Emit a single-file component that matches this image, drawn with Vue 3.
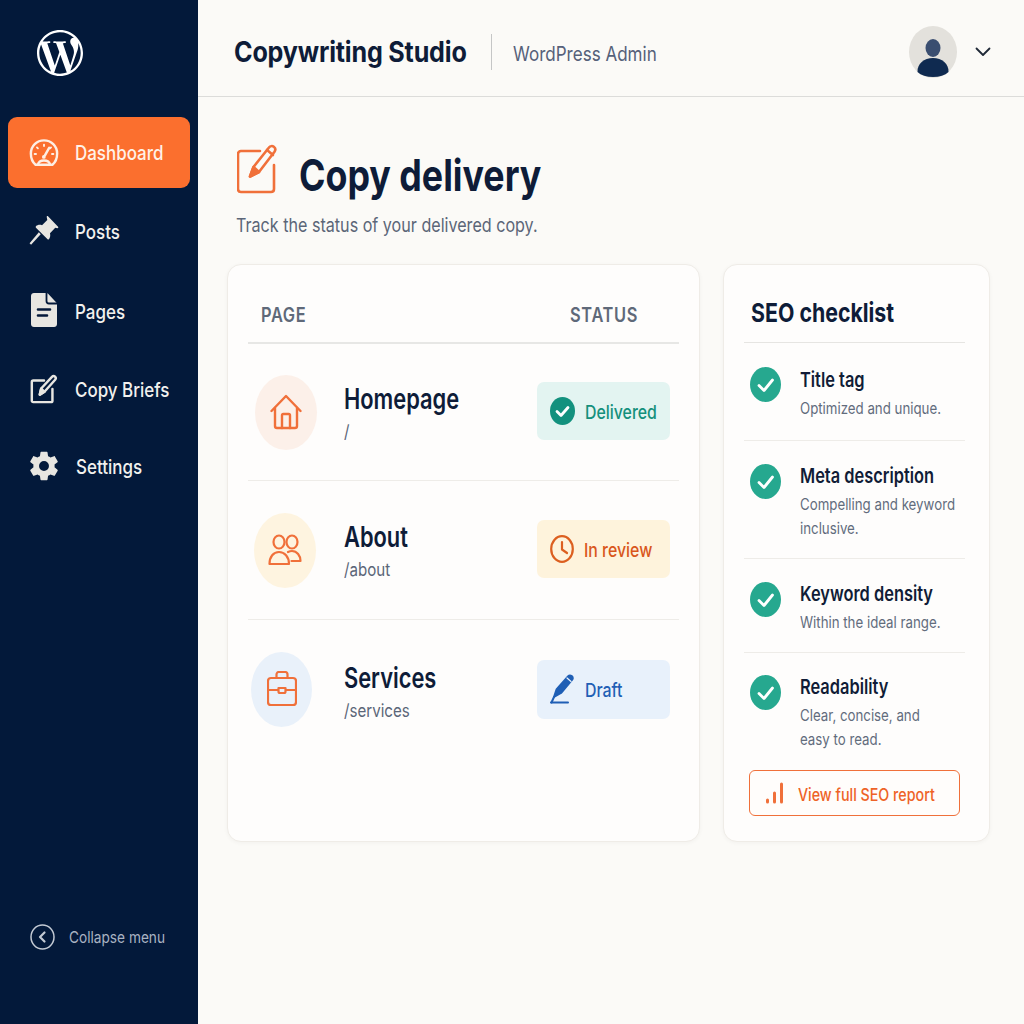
<script setup>
const pages = [
  { key: 'home', name: 'Homepage', path: '/', status: 'Delivered' },
  { key: 'about', name: 'About', path: '/about', status: 'In review' },
  { key: 'services', name: 'Services', path: '/services', status: 'Draft' },
]
const checks = [
  { title: 'Title tag', lines: ['Optimized and unique.'], cls: 'c1' },
  { title: 'Meta description', lines: ['Compelling and keyword', 'inclusive.'], cls: 'c2' },
  { title: 'Keyword density', lines: ['Within the ideal range.'], cls: 'c3' },
  { title: 'Readability', lines: ['Clear, concise, and', 'easy to read.'], cls: 'c4' },
]
</script>

<template>
  <div class="app">
    <aside class="side">
      <svg class="logo" viewBox="0 0 24 24" fill="#fff"><path d="M21.469 6.825c.84 1.537 1.318 3.3 1.318 5.175 0 3.979-2.156 7.456-5.363 9.325l3.295-9.527c.615-1.54.82-2.771.82-3.864 0-.405-.026-.78-.07-1.11m-7.981.105c.647-.03 1.232-.105 1.232-.105.582-.075.514-.93-.067-.899 0 0-1.755.135-2.88.135-1.064 0-2.85-.15-2.85-.15-.585-.03-.661.855-.075.885 0 0 .54.061 1.125.09l1.68 4.605-2.37 7.08L5.354 6.9c.649-.03 1.234-.1 1.234-.1.585-.075.516-.93-.065-.896 0 0-1.746.138-2.874.138-.2 0-.438-.008-.69-.015C4.911 3.15 8.235 1.215 12 1.215c2.809 0 5.365 1.072 7.286 2.833-.046-.003-.091-.009-.141-.009-1.06 0-1.812.923-1.812 1.914 0 .89.513 1.643 1.06 2.531.411.72.89 1.643.89 2.977 0 .915-.354 1.994-.821 3.479l-1.075 3.585-3.9-11.61.001.014zM12 22.784c-1.059 0-2.081-.153-3.048-.437l3.237-9.406 3.315 9.087c.024.053.05.101.078.149-1.12.393-2.325.609-3.582.609M1.211 12c0-1.564.336-3.05.935-4.39L7.29 21.709C3.694 19.96 1.212 16.271 1.211 12M12 0C5.385 0 0 5.385 0 12s5.385 12 12 12 12-5.385 12-12S18.615 0 12 0"/></svg>
      <nav class="nav">
        <a class="item active">
          <svg class="ni" viewBox="0 0 32 32" fill="none" stroke="#fdeee4" stroke-width="2.6" stroke-linecap="round" stroke-linejoin="round">
            <path d="M7 28.500C4 26 2 21.600 2 16.500 2 8.600 8.300 2.500 16 2.500s14 6.100 14 14c0 5.100-2 9.500-5 12z"/>
            <path d="M16 7v1.500M8.500 10l1 1M23.500 10l-1 1M6 17h1.500M24.500 17H26" stroke-width="2"/>
            <path d="M21.500 10.500l-4.500 8" stroke-width="2.600"/>
            <circle cx="15.800" cy="20.200" r="2" fill="#fdeee4" stroke="none"/>
            <path d="M9.500 28.500c.6-2.800 3.200-4.500 6.500-4.500s5.900 1.700 6.500 4.500"/>
          </svg>
          <span class="t nt">Dashboard</span>
        </a>
        <a class="item">
          <svg class="ni pin" viewBox="0 0 32 32" fill="#e8e6e1">
            <path d="M20 1 31 12.500c.6.700.1 1.700-.8 1.600l-2.200-.4-5.600 5.800c.6 2.600.2 4.800-1.200 6.300-.4.400-1 .4-1.400 0L7.400 13.500c-.4-.4-.4-1 0-1.400 1.500-1.500 3.800-2 6.500-1.200l5.600-5.700-.6-3.200c-.1-.9 1-1.300 1.600-.6z"/>
            <path d="M12.500 20.500 2.200 31.600.6 30 10.500 18.500z"/>
          </svg>
          <span class="t nt">Posts</span>
        </a>
        <a class="item">
          <svg class="ni page" viewBox="0 0 26 34">
            <path d="M3 0h12.500c.5 0 1 .2 1.400.6l8.400 8.800c.4.400.7.900.7 1.400V31c0 1.700-1.300 3-3 3H3c-1.700 0-3-1.300-3-3V3C0 1.300 1.300 0 3 0z" fill="#e8e6e1"/>
            <path d="M15.500 0v8c0 1.300 1 2.500 2.500 2.500h8" fill="none" stroke="#04193a" stroke-width="1.800"/>
            <path d="M7 16.500h12M7 22.500h9" stroke="#04193a" stroke-width="2.600" stroke-linecap="round" fill="none"/>
          </svg>
          <span class="t nt">Pages</span>
        </a>
        <a class="item">
          <svg class="ni" viewBox="0 0 32 32" fill="none" stroke="#e8e6e1" stroke-width="2.600" stroke-linecap="round" stroke-linejoin="round">
            <path d="M25 16v12.500c0 .8-.7 1.500-1.500 1.500h-19C3.700 30 3 29.300 3 28.500v-20C3 7.700 3.700 7 4.500 7H16"/>
            <path d="M11.500 22 13 15.500 24.500 3c1-1.100 2.300-1.100 3.300-.2.900.9 1 2.300.1 3.300L16.500 19z" fill="none"/>
            <path d="M11.500 22l5-3-3.500-3.500z" fill="#e8e6e1"/>
          </svg>
          <span class="t nt">Copy Briefs</span>
        </a>
        <a class="item">
          <svg class="ni gear" viewBox="0 0 24 24" fill="#e8e6e1"><path fill-rule="evenodd" d="M12,15.500A3.500,3.500 0 0,1 8.500,12A3.500,3.500 0 0,1 12,8.500A3.500,3.500 0 0,1 15.500,12A3.500,3.500 0 0,1 12,15.500M19.430,12.970C19.470,12.650 19.500,12.330 19.500,12C19.500,11.670 19.470,11.340 19.430,11L21.540,9.370C21.730,9.220 21.780,8.950 21.660,8.730L19.660,5.270C19.540,5.050 19.270,4.960 19.050,5.050L16.560,6.050C16.040,5.660 15.500,5.320 14.870,5.070L14.500,2.420C14.460,2.180 14.250,2 14,2H10C9.750,2 9.540,2.180 9.500,2.420L9.130,5.070C8.500,5.320 7.960,5.660 7.440,6.050L4.950,5.050C4.730,4.960 4.460,5.050 4.340,5.270L2.340,8.730C2.210,8.950 2.270,9.220 2.460,9.370L4.570,11C4.530,11.340 4.500,11.670 4.500,12C4.500,12.330 4.530,12.650 4.570,12.970L2.460,14.630C2.270,14.780 2.210,15.050 2.340,15.270L4.340,18.730C4.460,18.950 4.730,19.030 4.950,18.950L7.440,17.940C7.960,18.340 8.500,18.680 9.130,18.930L9.500,21.580C9.540,21.820 9.750,22 10,22H14C14.250,22 14.460,21.820 14.500,21.580L14.870,18.930C15.500,18.670 16.040,18.340 16.560,17.940L19.050,18.950C19.270,19.030 19.540,18.950 19.660,18.730L21.660,15.270C21.780,15.050 21.730,14.780 21.540,14.630L19.430,12.970Z"/></svg>
          <span class="t nt">Settings</span>
        </a>
      </nav>
      <div class="collapse">
        <svg width="25" height="26" viewBox="0 0 25 26" fill="none" stroke="#c3cad4" stroke-width="1.500" stroke-linecap="round" stroke-linejoin="round">
          <ellipse cx="12.500" cy="13" rx="11.500" ry="12"/>
          <path d="M14.500 8.500 10 13l4.500 4.500" stroke-width="2.200"/>
        </svg>
        <span class="t ct">Collapse menu</span>
      </div>
    </aside>

    <main class="main">
      <header class="top">
        <span class="t brand">Copywriting Studio</span>
        <i class="vr"></i>
        <span class="t admin">WordPress Admin</span>
        <div class="user">
          <svg width="48" height="52" viewBox="0 0 48 52">
            <ellipse cx="24" cy="26" rx="24" ry="26" fill="#e3e1dc"/>
            <ellipse cx="24" cy="22" rx="7.500" ry="9" fill="#3a4e70"/>
            <path d="M8.500 46C8 38 15 32 24 32s16 6 15.500 14c-3.500 3.300-9 5-15.500 5S12 49.300 8.500 46z" fill="#0f2a50"/>
          </svg>
          <svg class="chev" width="16" height="10" viewBox="0 0 16 10" fill="none" stroke="#1f2937" stroke-width="1.800" stroke-linecap="round" stroke-linejoin="round"><path d="M1.500 1.500 8 8l6.500-6.500"/></svg>
        </div>
      </header>

      <section class="content">
        <div class="head">
          <svg class="hi" width="42" height="50" viewBox="0 0 42 50" fill="none" stroke="#f0703a" stroke-width="2.600" stroke-linecap="round" stroke-linejoin="round">
            <path d="M37 21v24c0 1.700-1.300 3-3 3H4c-1.700 0-3-1.300-3-3V10c0-1.700 1.300-3 3-3h19"/>
            <path d="M13 32.500 16.500 23 32 3.500c1.200-1.500 3.300-1.800 4.800-.7 1.600 1.200 1.800 3.300.7 4.900L22 28z"/>
            <path d="M13 32.500 22 28l-5.500-5z" fill="#f0703a"/>
            <path d="M30 6l6 5"/>
          </svg>
          <h1><span class="t">Copy delivery</span></h1>
        </div>
        <p class="sub"><span class="t">Track the status of your delivered copy.</span></p>

        <div class="cards">
          <div class="card table">
            <div class="thead">
              <span class="t">PAGE</span>
              <span class="t">STATUS</span>
            </div>
            <div v-for="p in pages" :key="p.key" class="row" :class="p.key">
              <div class="bubble">
                <svg v-if="p.key === 'home'" width="32" height="36" viewBox="0 0 32 36" fill="none" stroke="#f0703a" stroke-width="2.400" stroke-linecap="round" stroke-linejoin="round">
                  <path d="M1.500 17 16 2l14.500 15"/>
                  <path d="M5 14v18c0 1 .7 2 2 2h18c1.300 0 2-1 2-2V14"/>
                  <path d="M12 34V21.500c0-.8.500-1.500 1.300-1.500h5.400c.8 0 1.300.7 1.300 1.500V34"/>
                </svg>
                <svg v-else-if="p.key === 'about'" width="34" height="32" viewBox="0 0 34 32" fill="none" stroke="#f0703a" stroke-width="2.200" stroke-linecap="round" stroke-linejoin="round">
                  <ellipse cx="11" cy="8" rx="5.500" ry="6.500"/>
                  <ellipse cx="24" cy="8" rx="5.500" ry="6.500"/>
                  <path d="M1.500 30c0-7.500 4-12 9.500-12s10 4.500 10 12z"/>
                  <path d="M20 18c1.200-.6 2.500-1 4-1 5 0 8.500 4.500 8.500 10h-9"/>
                </svg>
                <svg v-else width="30" height="36" viewBox="0 0 30 36" fill="none" stroke="#f0703a" stroke-width="2.200" stroke-linecap="round" stroke-linejoin="round">
                  <rect x="1" y="7" width="28" height="27" rx="3"/>
                  <path d="M9.500 7V3.500C9.500 2 10.500 1 12 1h6c1.500 0 2.500 1 2.500 2.500V7"/>
                  <path d="M1 19h10M19 19h10"/>
                  <path d="M11.500 17h7v3.500c0 .8-.7 1.500-1.500 1.500h-4c-.8 0-1.500-.7-1.500-1.500z"/>
                </svg>
              </div>
              <div class="info">
                <div class="nm"><span class="t">{{ p.name }}</span></div>
                <div class="pth"><span class="t">{{ p.path }}</span></div>
              </div>
              <div class="pill">
                <svg v-if="p.key === 'home'" width="25" height="28" viewBox="0 0 25 28">
                  <ellipse cx="12.500" cy="14" rx="12.500" ry="14" fill="#13917e"/>
                  <path d="M7 14.500l4 4 7-8" fill="none" stroke="#fff" stroke-width="2.800" stroke-linecap="round" stroke-linejoin="round"/>
                </svg>
                <svg v-else-if="p.key === 'about'" width="24" height="28" viewBox="0 0 24 28" fill="none" stroke="#dc5f20" stroke-width="2.200" stroke-linecap="round" stroke-linejoin="round">
                  <ellipse cx="12" cy="14" rx="10.800" ry="12.800"/>
                  <path d="M12 7v7.500l5 3.500"/>
                </svg>
                <svg v-else width="25" height="30" viewBox="0 0 25 30" fill="none" stroke="#1f5fb5" stroke-width="2" stroke-linecap="round" stroke-linejoin="round">
                  <path d="M4 23 6.500 15.500 18 2.500c1-1.100 2.500-1.300 3.700-.4 1.200.9 1.400 2.500.5 3.600L11 19z" fill="#1f5fb5"/>
                  <path d="M17 4l4 3.500" stroke="#e8f1fb" stroke-width="1.200"/>
                  <path d="M1 28.500h17"/>
                  <path d="M1.500 28.500 4 23"/>
                </svg>
                <span class="t ptx">{{ p.status }}</span>
              </div>
            </div>
          </div>

          <div class="card seo">
            <h2><span class="t">SEO checklist</span></h2>
            <div v-for="c in checks" :key="c.title" class="check" :class="c.cls">
              <svg class="tick" width="31" height="35" viewBox="0 0 31 35">
                <ellipse cx="15.500" cy="17.500" rx="15.500" ry="17.500" fill="#26a88f"/>
                <path d="M9 18.500l5 5 8.500-10.500" fill="none" stroke="#fff" stroke-width="2.800" stroke-linecap="round" stroke-linejoin="round"/>
              </svg>
              <div class="ctext">
                <div class="ctitle"><span class="t">{{ c.title }}</span></div>
                <div v-for="l in c.lines" :key="l" class="cdesc"><span class="t">{{ l }}</span></div>
              </div>
            </div>
            <button class="report">
              <svg width="20" height="22" viewBox="0 0 20 22" fill="none" stroke="#f0703a" stroke-width="3" stroke-linecap="round"><path d="M2.500 20v-2M9.500 20v-9M16.500 20V2"/></svg>
              <span class="t rt">View full SEO report</span>
            </button>
          </div>
        </div>
      </section>
    </main>
  </div>
</template>

<style>
html, body { margin: 0; background: #fbfaf7; overflow: hidden; }
</style>

<style scoped>
* { box-sizing: border-box; }
svg { flex: none; display: block; }
.app {
  display: flex;
  width: 1024px;
  height: 1024px;
  font-family: Inter, "Liberation Sans", sans-serif;
  color: #0e1c38;
  background: #fbfaf7;
  overflow: hidden;
}
.t {
  display: inline-block;
  white-space: nowrap;
  transform: scaleX(.84);
  transform-origin: 0 50%;
}
.side {
  flex: 0 0 198px;
  display: flex;
  flex-direction: column;
  background: #03193a;
}
.logo { width: 46px; height: 48px; margin: 29px 0 0 37px; }
.nav {
  display: grid;
  grid-template-rows: 71px 88px 72px 84px 70px;
  margin-top: 40px;
}
.item {
  display: flex;
  align-items: center;
  padding: 0 0 2px 29px;
  color: #f2f1ee;
}
.active {
  margin: 0 8px;
  padding: 0 0 0 21px;
  background: #fb6f2e;
  border-radius: 9px;
  color: #fff2e8;
}
.ni { width: 30px; height: 32px; margin-right: 16px; }
.pin { margin-top: -2px; }
.page { width: 26px; height: 34px; margin-left: 2px; margin-right: 18px; margin-top: -2px; }
.gear { width: 34px; height: 38px; margin-left: -2px; margin-right: 15px; }
.nt { font-size: 20.200px; font-weight: 500; }
.collapse {
  margin-top: auto;
  margin-bottom: 74px;
  margin-left: 30px;
  display: flex;
  align-items: center;
  gap: 14px;
  color: #a9b3c2;
}
.ct { font-size: 16.300px; }

.main { flex: 1; min-width: 0; display: flex; flex-direction: column; }
.top {
  height: 97px;
  flex: none;
  display: flex;
  align-items: center;
  padding: 8px 0 0 36px;
  border-bottom: 1px solid #dcdcda;
}
.brand { width: 257px; font-size: 28px; font-weight: 700; letter-spacing: -.2px; transform: scaleX(.897); }
.vr { width: 1px; height: 36px; background: #c5c6c6; margin: -1px 21px 0 0; }
.admin { font-size: 20.300px; color: #56617a; width: 300px; margin-top: 2px; }
.user { position: absolute; left: 909px; top: 26px; display: flex; align-items: center; }
.chev { margin-left: 18px; }

.content { padding: 47px 35px 0 29px; }
.head { display: flex; align-items: center; height: 50px; padding-left: 10px; }
.hi { margin-right: 20px; }
h1 { margin: 12px 0 0; font-size: 44px; font-weight: 700; line-height: 50px; color: #0e1c38; }
h1 .t { transform: scaleX(.813); }
.sub { margin: 19px 0 0 9px; font-size: 19.200px; line-height: 24px; color: #5b6678; }

.cards { display: flex; gap: 23px; margin-top: 27px; }
.card {
  min-width: 0;
  height: 578px;
  background: #fefdfc;
  border: 1px solid #efece7;
  border-radius: 14px;
  box-shadow: 0 1px 4px rgba(30, 30, 30, .04);
}
.table { flex: 0 0 473px; padding: 0 20px; }
.thead {
  height: 79px;
  display: flex;
  align-items: center;
  padding: 22px 0 0 13px;
  font-size: 19.500px;
  font-weight: 600;
  letter-spacing: .8px;
  color: #5f6979;
  border-bottom: 2px solid #e7e7e5;
}
.thead .t + .t { margin-left: 255px; }
.row {
  display: flex;
  align-items: center;
  height: 139px;
  border-top: 1px solid #eeece8;
}
.thead + .row { height: 136px; border-top: 0; }
.bubble {
  flex: none;
  width: 62px;
  height: 75px;
  border-radius: 50%;
  display: grid;
  place-items: center;
}
.home .bubble { margin: 0 27px 0 7px; background: #fcf0e9; }
.about .bubble { margin: 0 28px 0 6px; background: #fef4e0; }
.services .bubble { margin: 0 32px 0 3px; width: 61px; background: #e9f1fa; }
.info { flex: 0 0 193px; }
.home .info { padding-top: 2px; }
.about .info { padding-top: 2px; }
.services .info { padding-top: 6px; }
.nm { font-size: 28px; font-weight: 600; line-height: 36px; color: #0e1c38; }
.nm .t { transform: scaleX(.78); }
.pth { font-size: 18px; line-height: 28px; margin-top: 1px; color: #5b6678; }
.pill {
  flex: none;
  width: 133px;
  height: 58px;
  border-radius: 7px;
  display: flex;
  align-items: center;
  gap: 10px;
  padding-left: 13px;
  font-size: 18.900px;
  font-weight: 500;
}
.ptx { margin-top: 2px; }
.home .pill { background: #e3f4f1; color: #14907c; margin-top: -2px; }
.about .pill { background: #fef3dc; color: #d9571c; margin-top: -2px; }
.services .pill { background: #e8f1fb; color: #1f5fb5; height: 59px; }

.seo { flex: 0 0 267px; padding: 0 24px 0 20px; display: flex; flex-direction: column; }
h2 {
  margin: 0;
  height: 78px;
  padding: 28px 0 0 7px;
  font-size: 26px;
  line-height: 40px;
  font-weight: 700;
  border-bottom: 1px solid #e6e5e2;
  color: #0e1c38;
}
h2 .t { transform: scaleX(.82); }
.check { display: flex; padding-left: 6px; border-bottom: 1px solid #eeece8; }
.c1 { height: 98px; padding-top: 24px; }
.c2 { height: 118px; padding-top: 23px; }
.c3 { height: 94px; padding-top: 23px; }
.c4 { height: 110px; padding-top: 22px; border-bottom: 0; }
.c2 .ctext, .c3 .ctext, .c4 .ctext { margin-top: -1px; }
.tick { margin-right: 19px; }
.ctitle { font-size: 20.500px; font-weight: 600; line-height: 28px; margin-top: -1px; color: #101c36; }
.ctitle .t { transform: scaleX(.8); }
.cdesc { font-size: 15.800px; line-height: 23.500px; color: #626c7c; }
.ctitle + .cdesc { margin-top: 3px; }
.report {
  width: 211px;
  height: 46px;
  margin: 7px 0 0 5px;
  display: flex;
  align-items: center;
  gap: 13px;
  padding: 0 0 0 15px;
  border: 1.500px solid #f0703a;
  border-radius: 6px;
  background: #fffdfb;
  color: #ee6327;
  font: 500 17px Inter, "Liberation Sans", sans-serif;
}
.rt { margin-top: 3px; }
</style>
